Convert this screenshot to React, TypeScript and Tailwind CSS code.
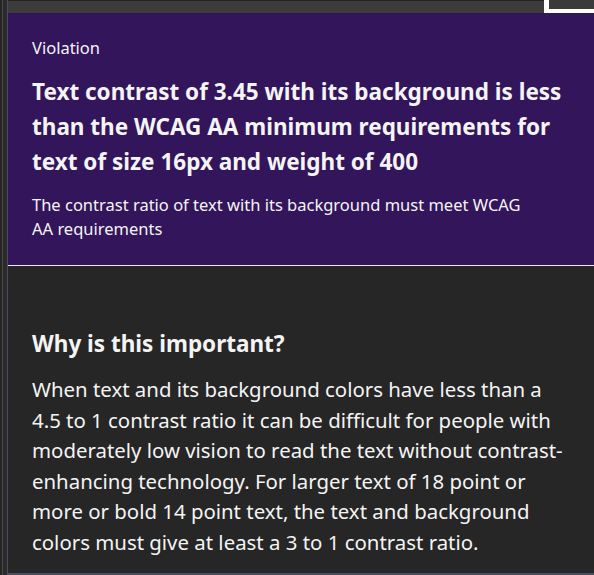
export default function App() {
  return (
    <div className="w-[594px] h-[575px] overflow-hidden bg-[#2b2b2b] flex" style={{ fontFamily: '"Noto Sans", "Open Sans", sans-serif' }}>
      {/* left gutter */}
      <div className="w-[7px] shrink-0 flex">
        <div className="w-[2px] bg-[#252525]" />
        <div className="w-px bg-[#4a4a4a]" />
        <div className="flex-1 bg-[#2a2a2a]" />
      </div>
      <div className="w-px shrink-0 bg-[#4b4d5a]" />

      <div className="flex-1 flex flex-col min-w-0">
        {/* top bar */}
        <div className="relative h-[13px] shrink-0 bg-[#3c3c3c] border-t border-[#242424]">
          <div className="absolute left-[536px] -top-px w-[60px] h-[13px] border-l-[5px] border-b-[4px] border-white bg-[#3a3a3a]" />
        </div>

        {/* violation panel */}
        <section className="bg-[#32155b] border-b border-[#e8e8e8] pl-6 pr-6 pt-[23px] pb-[24px] text-[#f4f4f4]">
          <p className="text-[16.5px] leading-6">Violation</p>
          <h2 className="mt-[14px] text-[22.5px] leading-[35px] font-bold">
            Text contrast of 3.45 with its background is less than the WCAG AA minimum requirements for text of size 16px and weight of 400
          </h2>
          <p className="mt-[14px] text-[16.5px] leading-6 pr-8">
            The contrast ratio of text with its background must meet WCAG AA requirements
          </p>
        </section>

        {/* explanation panel */}
        <section className="flex-1 bg-[#262626] border-b-2 border-[#4b4f5c] pl-6 pr-[22px] pt-[62px] text-[#f4f4f4]">
          <h3 className="text-[22.5px] leading-8 font-bold">Why is this important?</h3>
          <p className="mt-[14px] text-[20.4px] leading-[30.6px]">
            When text and its background colors have less than a 4.5 to 1 contrast ratio it can be difficult for people with moderately low vision to read the text without contrast-enhancing technology. For larger text of 18 point or more or bold 14 point text, the text and background colors must give at least a 3 to 1 contrast ratio.
          </p>
        </section>
      </div>
    </div>
  );
}
